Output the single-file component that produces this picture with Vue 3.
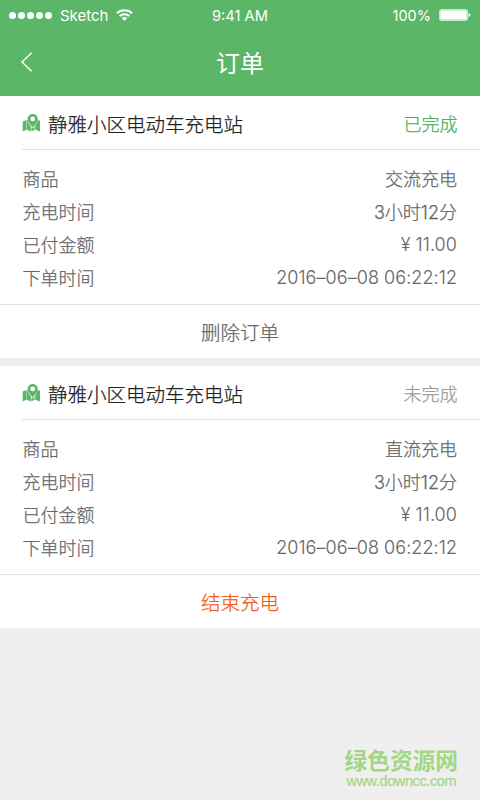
<script setup>
const orders = [
  {
    station: '静雅小区电动车充电站', status: '已完成', done: true, action: '删除订单',
    rows: [['商品', '交流充电'], ['充电时间', '3小时12分'], ['已付金额', '¥ 11.00'], ['下单时间', '2016–06–08 06:22:12']],
  },
  {
    station: '静雅小区电动车充电站', status: '未完成', done: false, action: '结束充电',
    rows: [['商品', '直流充电'], ['充电时间', '3小时12分'], ['已付金额', '¥ 11.00'], ['下单时间', '2016–06–08 06:22:12']],
  },
]
</script>

<template>
  <div class="screen">
    <header class="header">
      <div class="status-bar">
        <div class="carrier">
          <span class="dots"><i v-for="n in 5" :key="n"></i></span>
          <span class="name">Sketch</span>
          <svg class="wifi" width="17" height="12" viewBox="0 0 17 12">
            <g fill="none" stroke="#fff" stroke-width="2">
              <path d="M0.9 4.3C5 0.3 12 0.3 16.1 4.3" />
              <path d="M3.6 7.1C6.3 4.6 10.7 4.6 13.4 7.1" />
            </g>
            <path d="M5.6 9.1C7.2 7.5 9.8 7.5 11.4 9.1L8.5 11.9Z" fill="#fff" />
          </svg>
        </div>
        <div class="clock">9:41 AM</div>
        <div class="power">
          <span>100%</span>
          <svg width="32" height="12" viewBox="0 0 32 12">
            <rect x="0.5" y="0.5" width="28" height="11" rx="1.5" fill="none" stroke="#fff" stroke-opacity="0.65" />
            <rect x="1.2" y="1.2" width="26.6" height="9.6" rx="0.8" fill="#fff" />
            <path d="M29.5 4Q31.5 4.4 31.5 6T29.5 8Z" fill="#fff" />
          </svg>
        </div>
      </div>
      <div class="nav">
        <svg class="back" width="12" height="20" viewBox="0 0 12 20">
          <path d="M10.6 0.7L1 10L10.6 19.3" fill="none" stroke="#fff" stroke-width="1.4" />
        </svg>
        <h1>订单</h1>
        <span class="spacer"></span>
      </div>
    </header>

    <main class="orders">
      <section v-for="(order, i) in orders" :key="i" class="card">
        <div class="head">
          <svg class="pin" width="18" height="18" viewBox="0 0 18 18">
            <path d="M0.7 7.6L4.4 6V15.8L0.7 17.5Z M4.8 6L5.6 6.2C6 8.3 7.2 10.2 8.8 12L8.8 17.5L4.8 15.8Z M9.4 13.4L10.8 14.3L12.6 12.3V15.8L9.4 17.4Z M13.2 10.9C14.5 9.3 15.3 7.8 15.6 6L18 6.8V17.5L13.2 15.8Z" fill="#5cb667" />
            <path fill-rule="evenodd" d="M10.7 0A5.1 5.1 0 0 1 15.8 5C15.8 7.7 13.3 10.4 10.7 13.4C8.1 10.4 5.6 7.7 5.6 5A5.1 5.1 0 0 1 10.7 0ZM10.7 2.5A2.4 2.4 0 1 0 10.7 7.3A2.4 2.4 0 1 0 10.7 2.5Z" fill="#5cb667" />
          </svg>
          <h2>{{ order.station }}</h2>
          <span class="state" :class="{ done: order.done }">{{ order.status }}</span>
        </div>
        <dl class="details">
          <div v-for="row in order.rows" :key="row[0]" class="row">
            <dt>{{ row[0] }}</dt>
            <dd :class="{ numeric: /^[\d¥][^小]*$/.test(row[1]) }">{{ row[1] }}</dd>
          </div>
        </dl>
        <div class="action" :class="{ stop: !order.done }">{{ order.action }}</div>
      </section>
    </main>

    <footer class="mark">
      <strong>绿色资源网</strong>
      <span>www.downcc.com</span>
    </footer>
  </div>
</template>

<style>
body { background: #efefef; }
</style>

<style scoped>
.screen {
  width: 480px;
  height: 800px;
  display: flex;
  flex-direction: column;
  overflow: hidden;
  background: #efefef;
  color: #666;
  font-family: Inter, "Noto Sans CJK SC", sans-serif;
}
h1, h2, dl, dt, dd { margin: 0; font-weight: 300; }
svg { display: block; flex: none; }
.header { height: 96px; background: #5cb667; color: #fff; }
.status-bar {
  height: 30px;
  display: grid;
  grid-template-columns: 1fr auto 1fr;
  align-items: center;
  padding: 0 9px;
  font-size: 15px;
  line-height: 30px;
}
.carrier { display: flex; align-items: center; }
.dots { display: flex; gap: 2px; margin: 0 8px 1px 0; }
.dots i { width: 7px; height: 7px; border-radius: 50%; background: #fff; }
.name { padding-top: 1px; }
.wifi { margin-left: 8px; margin-bottom: 1px; }
.clock { font-size: 14.7px; padding-top: 1px; }
.power { display: flex; align-items: center; justify-content: flex-end; gap: 8px; font-size: 14.5px; }
.power svg { margin-bottom: 1px; }
.power span { padding-top: 1px; }
.nav {
  height: 66px;
  display: grid;
  grid-template-columns: 1fr auto 1fr;
  align-items: center;
  padding: 0 21px;
}
.back { margin-bottom: 4px; }
h1 { font-size: 24px; line-height: 66px; font-weight: 400; padding-top: 1px; }
.orders { display: flex; flex-direction: column; gap: 8px; }
.card { height: 262px; background: #fff; -webkit-text-stroke: 0.25px currentColor; }
.head {
  height: 53px;
  margin-left: 22px;
  padding-right: 22.5px;
  display: flex;
  align-items: center;
  border-bottom: 1px solid #e2e2e2;
}
.pin { margin-top: 1px; }
h2 { margin-left: 8px; font-size: 19.5px; line-height: 47px; color: #222; padding-top: 6px; }
.state { margin-left: auto; font-size: 18px; font-weight: 300; color: #999; }
.state.done { color: #49ae55; }
.details { height: 155px; box-sizing: border-box; padding: 13px 23px 0 22.5px; border-bottom: 1px solid #e2e2e2; }
.row { display: flex; justify-content: space-between; height: 33px; font-size: 18px; line-height: 33px; }
.numeric { letter-spacing: 0.07px; line-height: 32px; -webkit-text-stroke-width: 0.1px; }
.action { font-size: 19.5px; font-weight: 300; line-height: 57px; height: 53px; text-align: center; }
.action.stop { color: #ef5b18; }
.mark {
  margin-top: auto;
  align-self: flex-end;
  display: flex;
  flex-direction: column;
  align-items: center;
  padding: 0 22px 11px 0;
  color: #a4d683;
}
.mark strong { font-size: 22.7px; line-height: 24px; }
.mark span { font: 14.5px/16px "Liberation Sans", Arial, sans-serif; letter-spacing: -0.4px; -webkit-text-stroke: 0.2px currentColor; }
</style>
